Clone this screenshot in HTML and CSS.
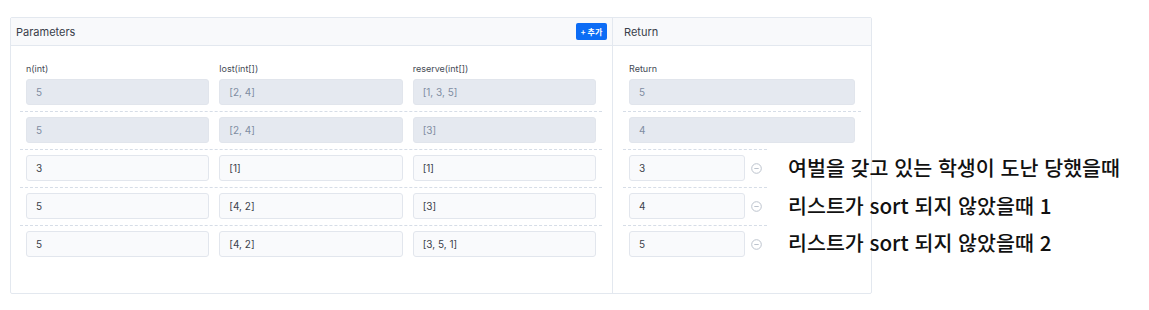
FILE: index.html
```html
<!DOCTYPE html>
<html lang="ko">
<head>
    <meta charset="UTF-8">
    <meta name="viewport" content="width=device-width, initial-scale=1.0">
    <title>Test cases</title>
    <link rel="stylesheet" href="styles.css">
</head>
<body>
    <div class="testcase">
        <div class="params">
            <div class="panel-head">
                <span>Parameters</span>
                <button class="add-btn">+ 추가</button>
            </div>
            <div class="panel-body">
                <div class="row grid">
                    <div class="cell"><label>n(int)</label><input class="readonly" value="5" readonly></div>
                    <div class="cell"><label>lost(int[])</label><input class="readonly" value="[2, 4]" readonly></div>
                    <div class="cell"><label>reserve(int[])</label><input class="readonly" value="[1, 3, 5]" readonly></div>
                </div>
                <div class="row grid">
                    <input class="readonly" value="5" readonly>
                    <input class="readonly" value="[2, 4]" readonly>
                    <input class="readonly" value="[3]" readonly>
                </div>
                <div class="row grid">
                    <input value="3">
                    <input value="[1]">
                    <input value="[1]">
                </div>
                <div class="row grid">
                    <input value="5">
                    <input value="[4, 2]">
                    <input value="[3]">
                </div>
                <div class="row grid">
                    <input value="5">
                    <input value="[4, 2]">
                    <input value="[3, 5, 1]">
                </div>
            </div>
        </div>
        <div class="returns">
            <div class="panel-head return-head">
                <span>Return</span>
            </div>
            <div class="panel-body">
                <div class="row">
                    <div class="cell"><label>Return</label><input class="readonly" value="5" readonly></div>
                </div>
                <div class="row">
                    <input class="readonly" value="4" readonly>
                </div>
                <div class="row short">
                    <input value="3">
                    <button class="remove" title="삭제"><svg width="11" height="11" viewBox="0 0 11 11"><circle cx="5.5" cy="5.5" r="4.8" fill="none" stroke="#bcc3cd" stroke-width="1"/><line x1="3.3" y1="5.5" x2="7.7" y2="5.5" stroke="#bcc3cd" stroke-width="1"/></svg></button>
                </div>
                <div class="row short">
                    <input value="4">
                    <button class="remove" title="삭제"><svg width="11" height="11" viewBox="0 0 11 11"><circle cx="5.5" cy="5.5" r="4.8" fill="none" stroke="#bcc3cd" stroke-width="1"/><line x1="3.3" y1="5.5" x2="7.7" y2="5.5" stroke="#bcc3cd" stroke-width="1"/></svg></button>
                </div>
                <div class="row short">
                    <input value="5">
                    <button class="remove" title="삭제"><svg width="11" height="11" viewBox="0 0 11 11"><circle cx="5.5" cy="5.5" r="4.8" fill="none" stroke="#bcc3cd" stroke-width="1"/><line x1="3.3" y1="5.5" x2="7.7" y2="5.5" stroke="#bcc3cd" stroke-width="1"/></svg></button>
                </div>
            </div>
        </div>
    </div>

    <!-- notes written next to the added cases -->
    <div class="notes">
        <p>여벌을 갖고 있는 학생이 도난 당했을때</p>
        <p>리스트가 sort 되지 않았을때 1</p>
        <p>리스트가 sort 되지 않았을때 2</p>
    </div>
</body>
</html>
```

FILE: styles.css
```css
body {
    margin: 0;
    padding: 17px 0 0 10px;
    background: #ffffff;
    font-family: 'Inter', 'Noto Sans CJK KR', sans-serif;
    color: #333a45;
}

.testcase {
    width: 862px;
    height: 277px;
    box-sizing: border-box;
    border: 1px solid #e3e8ef;
    border-radius: 2px;
    display: flex;
}

.params {
    width: 601px;
    border-right: 1px solid #e3e8ef;
}

.returns {
    flex: 1;
}

.panel-head {
    height: 27px;
    border-bottom: 1px solid #e3e8ef;
    background: #f8f9fb;
    display: flex;
    align-items: center;
    justify-content: space-between;
    padding: 0 5px;
    font-size: 11px;
    color: #39404a;
}

.return-head {
    padding: 0 11px;
}

.add-btn {
    background: #0c6cf5;
    color: #ffffff;
    border: none;
    border-radius: 2px;
    height: 17px;
    width: 31px;
    padding: 0;
    font-family: 'Noto Sans CJK KR', sans-serif;
    font-size: 8px;
    font-weight: 700;
    cursor: pointer;
}

.panel-body {
    padding: 11px 10px 0 9px;
}

.returns .panel-body {
    padding: 11px 10px 0 10px;
}

.row {
    padding: 5px 6px 6px;
}

.row + .row {
    border-top: 1px dashed #d6dde7;
}

.grid {
    display: grid;
    grid-template-columns: repeat(3, 1fr);
    gap: 10px;
}

.cell label {
    display: block;
    font-size: 9px;
    line-height: 12px;
    margin: 1px 0 4px;
    color: #444a54;
}

.row input {
    display: block;
    width: 100%;
    height: 26px;
    box-sizing: border-box;
    padding: 0 9px;
    border: 1px solid #e2e6ed;
    border-radius: 3px;
    background: #f9fafc;
    font-family: 'Inter', sans-serif;
    font-size: 10px;
    color: #3b414b;
    outline: none;
}

.row input.readonly {
    background: #e5e9f0;
    border-color: #e1e5ec;
    color: #7f8da2;
}

.short {
    width: 144px;
    box-sizing: border-box;
    display: flex;
    align-items: center;
    gap: 6px;
}

.short input {
    width: 116px;
    flex: none;
}

.remove {
    border: none;
    background: none;
    padding: 0;
    width: 11px;
    height: 11px;
    display: flex;
    cursor: pointer;
}

.notes {
    position: absolute;
    left: 788px;
    top: 149px;
    font-family: 'Noto Sans CJK KR', sans-serif;
    font-size: 20.6px;
    font-weight: 500;
    line-height: 37.5px;
    color: #111111;
}

.notes p {
    margin: 0;
}
```
